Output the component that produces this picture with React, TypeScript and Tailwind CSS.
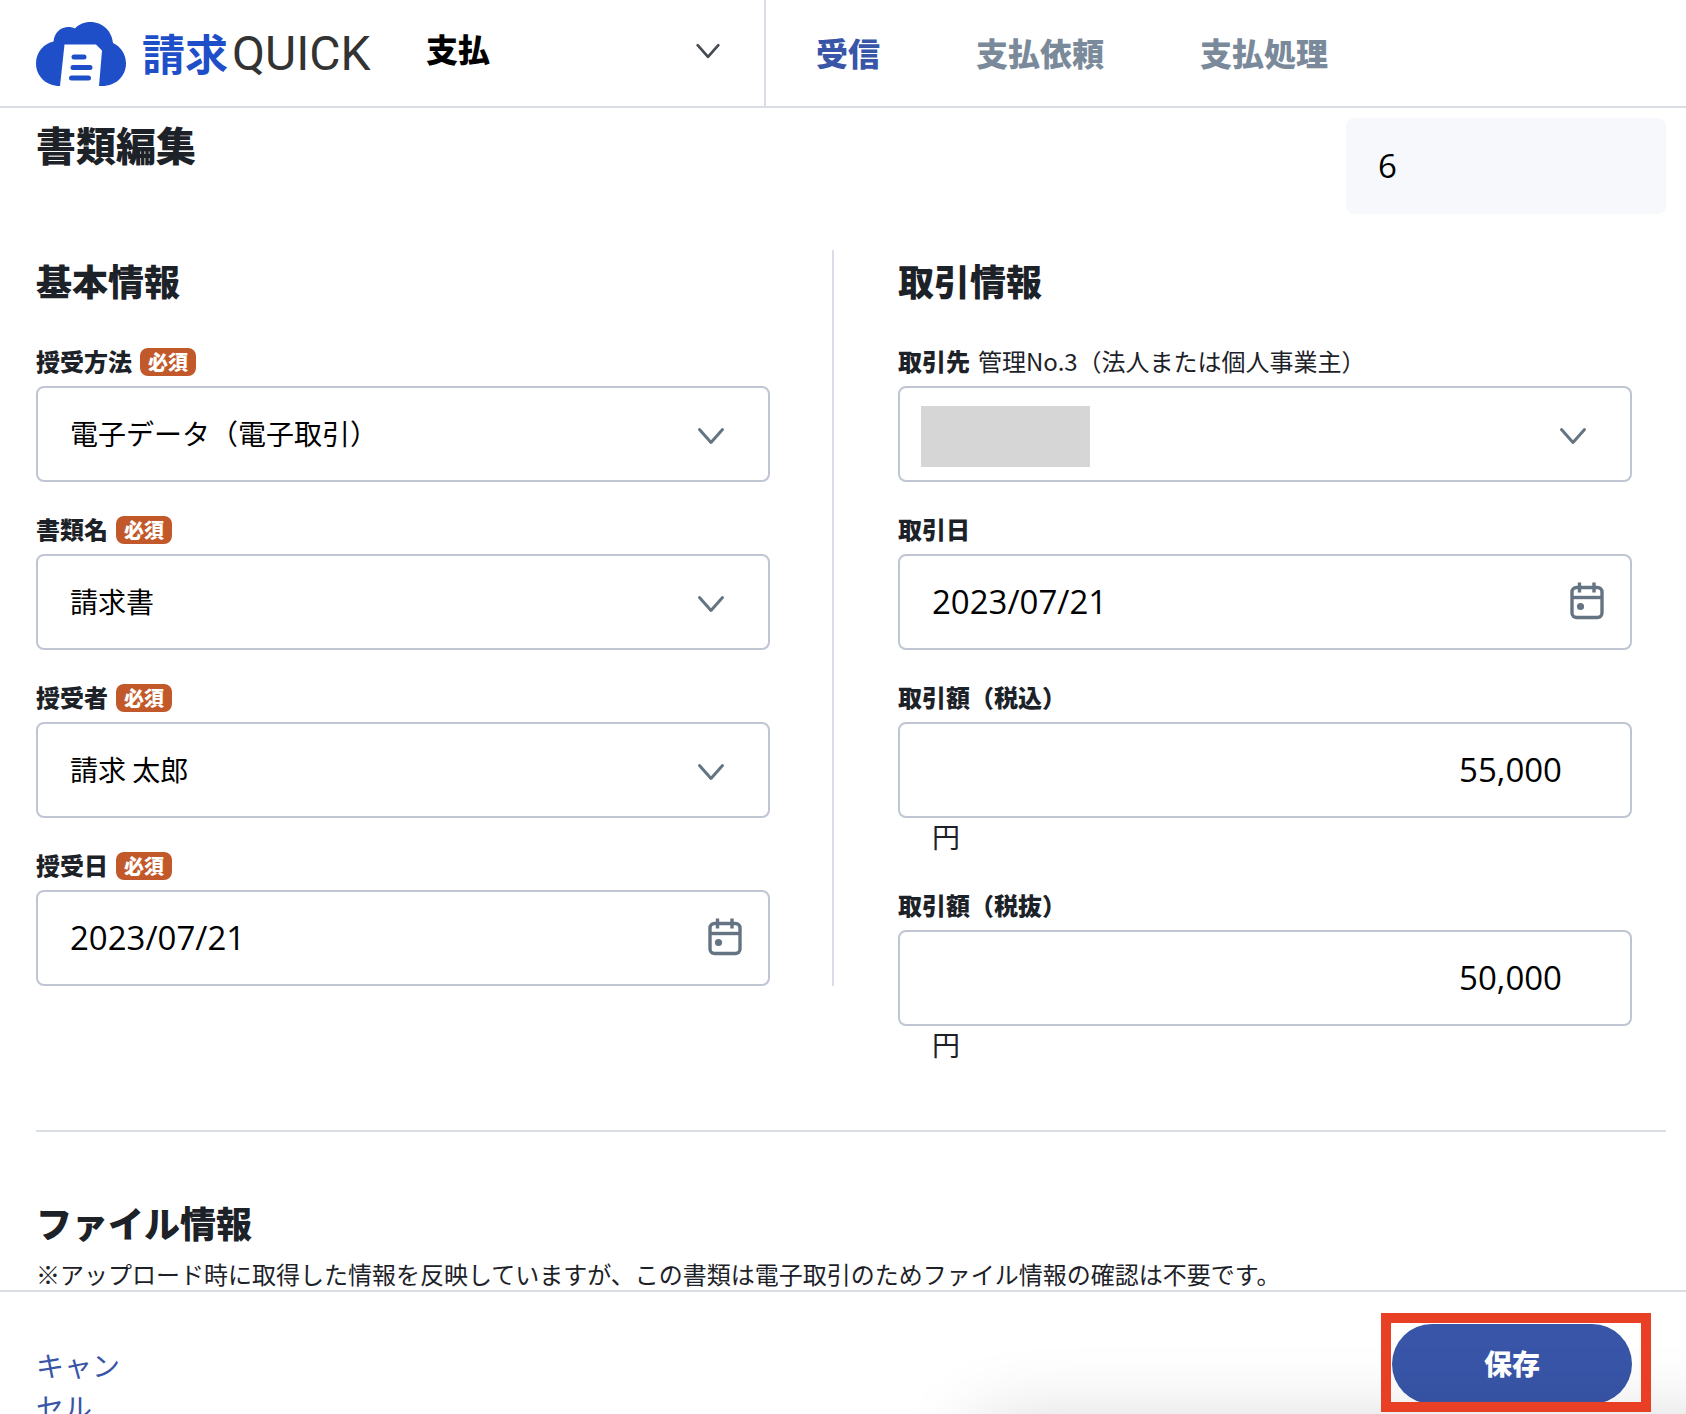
import React from 'react';

const fieldBox =
  'block w-full h-24 rounded-lg border-2 border-[#bfc5d2] bg-white px-8 pb-0.5 text-black focus:outline-none focus:border-[#3855a8]';

function Chevron({ className = '' }: { className?: string }) {
  return (
    <svg
      viewBox="0 0 28 20"
      fill="none"
      stroke="currentColor"
      strokeWidth="3"
      strokeLinecap="round"
      strokeLinejoin="round"
      className={className}
      aria-hidden="true"
    >
      <path d="M2.5 3.5 14 16.5 25.5 3.5" />
    </svg>
  );
}

function CalendarIcon() {
  return (
    <svg viewBox="0 0 36 40" className="w-9 h-10" fill="none" stroke="currentColor" strokeWidth="3.4" aria-hidden="true">
      <rect x="3" y="6.5" width="30" height="30" rx="4.5" />
      <path d="M3 16.500h30" />
      <path d="M10.500 1.500v10M25 1.500v10" />
      <circle cx="11.5" cy="25.5" r="3.6" fill="currentColor" stroke="none" />
    </svg>
  );
}

function Logo() {
  return (
    <a href="#" className="flex items-center" aria-label="請求QUICK">
      <svg viewBox="0 0 90 64" className="w-[90px] h-16 shrink-0" aria-hidden="true">
        <path
          fill="#1f4fc8"
          d="M24 64C10 64 0 54 0 41.5 0 30 8 21.500 17.500 19.500 18.500 10 25 5 32.500 5c2.500 0 4.500.5 6.500 1.500C42.500 2.500 48 0 54.500 0c12 0 21.500 9 22.500 21C84.500 24.500 90 32 90 41.500 90 54 80 64 66 64Z"
        />
        <path fill="#fff" d="M28.500 22.500H60l6 6L63 64H24Z" />
        <path d="M38 35h10M37 45.500h17M35.500 56h17" stroke="#1f4fc8" strokeWidth="5" strokeLinecap="round" />
      </svg>
      <span className="ml-4 flex items-center pb-1 whitespace-nowrap">
        <span className="text-[43px] leading-none font-bold text-[#1f4fc8]">請求</span>
        <span className="ml-1 pt-1 font-['Roboto',sans-serif] text-[48px] leading-none text-[#333]">QUICK</span>
      </span>
    </a>
  );
}

interface FieldProps {
  id: string;
  label: string;
  note?: string;
  required?: boolean;
  children: React.ReactNode;
}

function Field({ id, label, note, required, children }: FieldProps) {
  return (
    <div>
      <div className="mb-1.5 flex h-9 items-center gap-2 text-2xl whitespace-nowrap">
        <label htmlFor={id} className="pb-0.5 font-black">
          {label}
        </label>
        {required && (
          <span className="flex h-7 w-14 items-center justify-center rounded-lg bg-[#c1592b] text-xl font-black text-white">
            必須
          </span>
        )}
        {note && <span className="pb-0.5">{note}</span>}
      </div>
      {children}
    </div>
  );
}

function SelectBox({ id, value, masked }: { id: string; value: string; masked?: boolean }) {
  return (
    <div className="relative">
      <select id={id} className={`${fieldBox} appearance-none text-[28px]`}>
        <option>{value}</option>
      </select>
      {masked && <span className="absolute left-[23px] top-5 h-[61px] w-[169px] bg-[#d6d6d6]" />}
      <Chevron className="pointer-events-none absolute right-[45px] top-10 h-5 w-7 text-[#657482]" />
    </div>
  );
}

function DateBox({ id, value }: { id: string; value: string }) {
  return (
    <div className="relative">
      <input id={id} type="text" defaultValue={value} className={`${fieldBox} font-['Open_Sans',sans-serif] text-[33px]`} />
      <button type="button" aria-label="カレンダーを開く" className="absolute right-[27px] top-[27px] text-[#657482]">
        <CalendarIcon />
      </button>
    </div>
  );
}

function AmountBox({ id, value }: { id: string; value: string }) {
  return (
    <div>
      <input
        id={id}
        type="text"
        inputMode="numeric"
        defaultValue={value}
        className={`${fieldBox} pr-[68px] text-right font-['Open_Sans',sans-serif] text-[33px]`}
      />
      <div className="h-10 pl-[34px] text-[28px] leading-9">円</div>
    </div>
  );
}

export default function App() {
  return (
    <div className="min-h-screen bg-white font-['Noto_Sans_CJK_JP',sans-serif] text-[#1c2228]">
      <header className="flex h-[108px] border-b-2 border-[#d9dde6]">
        <div className="flex w-[766px] shrink-0 items-center border-r-2 border-[#d9dde6] pt-0.5 pl-9">
          <Logo />
          <div className="relative ml-auto w-[338px]">
            <select aria-label="メニュー" className="w-full appearance-none bg-transparent pb-3 text-[32px] leading-10 font-black text-black">
              <option>支払</option>
            </select>
            <Chevron className="pointer-events-none absolute right-[43px] top-3.5 h-[18px] w-[26px] text-[#444b52]" />
          </div>
        </div>
        <nav className="flex items-center gap-24 pb-0.5 pl-[50px] text-[32px] font-black whitespace-nowrap text-[#7b8a9a]">
          <a href="#" className="text-[#3855a8]">受信</a>
          <a href="#">支払依頼</a>
          <a href="#">支払処理</a>
        </nav>
      </header>

      <main className="pt-2.5 pr-5 pb-24 pl-9">
        <div className="flex items-start justify-between">
          <h1 className="flex h-14 items-center pb-1 text-[40px] font-black">書類編集</h1>
          <input
            aria-label="書類番号"
            readOnly
            defaultValue="6"
            className="h-24 w-80 rounded-lg bg-[#f6f8fc] px-8 pb-0.5 font-['Open_Sans',sans-serif] text-[33px] text-black"
          />
        </div>

        <form className="mt-9 flex items-start pr-[34px]">
          <section className="flex-1 border-r-2 border-[#d9dde6] pr-[62px]">
            <h2 className="flex h-16 items-center pb-1 text-4xl font-black">基本情報</h2>
            <div className="mt-[30px] flex flex-col gap-[30px]">
              <Field id="method" label="授受方法" required>
                <SelectBox id="method" value="電子データ（電子取引）" />
              </Field>
              <Field id="doc-name" label="書類名" required>
                <SelectBox id="doc-name" value="請求書" />
              </Field>
              <Field id="person" label="授受者" required>
                <SelectBox id="person" value="請求 太郎" />
              </Field>
              <Field id="received-date" label="授受日" required>
                <DateBox id="received-date" value="2023/07/21" />
              </Field>
            </div>
          </section>

          <section className="flex-1 pl-16">
            <h2 className="flex h-16 items-center pb-1 text-4xl font-black">取引情報</h2>
            <div className="mt-[30px] flex flex-col gap-[30px]">
              <Field id="partner" label="取引先" note="管理No.3（法人または個人事業主）">
                <SelectBox id="partner" value="" masked />
              </Field>
              <Field id="deal-date" label="取引日">
                <DateBox id="deal-date" value="2023/07/21" />
              </Field>
              <Field id="amount-in" label="取引額（税込）">
                <AmountBox id="amount-in" value="55,000" />
              </Field>
              <Field id="amount-ex" label="取引額（税抜）">
                <AmountBox id="amount-ex" value="50,000" />
              </Field>
            </div>
          </section>
        </form>

        <section className="mt-16 border-t-2 border-[#d9dee4] pt-16">
          <h2 className="flex h-14 items-center pb-1 text-4xl font-black">ファイル情報</h2>
          <p className="text-2xl leading-[44px]">
            ※アップロード時に取得した情報を反映していますが、この書類は電子取引のためファイル情報の確認は不要です。
          </p>
        </section>
      </main>

      <footer className="fixed inset-x-0 bottom-0 flex h-[124px] items-start justify-between overflow-hidden border-t-2 border-[#d9dee4] bg-white pt-8 pr-[54px] pl-9">
        <a href="#" className="mt-5 w-[88px] text-[28px] leading-[42px] text-[#3855a8]">
          キャンセル
        </a>
        <div className="relative">
          <button type="submit" className="h-20 w-60 rounded-full bg-[#3855a8] pb-0.5 text-[28px] font-black text-white">
            保存
          </button>
          <span className="pointer-events-none absolute -top-[11px] -left-[11px] z-10 h-[99px] w-[270px] border-10 border-[#e93f25]" />
        </div>
        {/* soft shade rising from the lower right edge */}
        <span className="pointer-events-none absolute top-full left-[58%] -right-40 mt-6 h-20 rounded-[40px] shadow-[0_0_80px_16px_rgba(0,0,0,0.16)]" />
      </footer>
    </div>
  );
}
